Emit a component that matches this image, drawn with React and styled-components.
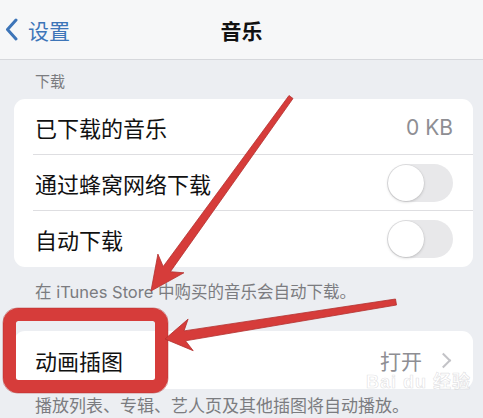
import React from 'react';
import styled, { createGlobalStyle } from 'styled-components';

const GlobalStyle = createGlobalStyle`
  html, body {
    margin: 0;
    padding: 0;
    background: #eceef2;
  }
  body {
    font-family: "Inter", "Noto Sans CJK SC", sans-serif;
    -webkit-font-smoothing: antialiased;
  }
`;

const Screen = styled.div`
  position: relative;
  width: 483px;
  height: 418px;
  overflow: hidden;
  background: #eceef2;
`;

const NavBar = styled.div`
  height: 60px;
  display: grid;
  grid-template-columns: 1fr auto 1fr;
  align-items: center;
  background: #f6f7f8;
  border-bottom: 1px solid #d6d8dc;
  box-sizing: border-box;
`;

const Back = styled.div`
  display: flex;
  align-items: center;
  gap: 10px;
  padding-left: 5px;
  color: #3d75b8;
  font-size: 21px;
`;

const NavTitle = styled.div`
  font-size: 21px;
  font-weight: 700;
  color: #111;
`;

const SectionHeader = styled.div`
  height: 39px;
  display: flex;
  align-items: center;
  padding: 2px 0 0 35px;
  box-sizing: border-box;
  font-size: 15px;
  color: #7b7c80;
`;

const Card = styled.div`
  margin: ${(p) => p.$top || 0}px 10px 0 14px;
  background: #fff;
  border-radius: 11px;
  overflow: hidden;
`;

const Row = styled.div`
  position: relative;
  height: ${(p) => p.$h || 56}px;
  display: flex;
  align-items: center;
  justify-content: space-between;
  padding: 0 20px 0 21px;
  font-size: 22px;
  color: #111;
  &:not(:last-child)::after {
    content: '';
    position: absolute;
    left: 19px;
    right: 0;
    bottom: 0;
    height: 1px;
    background: #dedee1;
  }
`;

const Value = styled.div`
  display: flex;
  align-items: center;
  gap: 16px;
  color: #8e8e93;
  font-size: 21px;
`;

const Chevron = styled.span`
  display: inline-block;
  width: 9px;
  height: 9px;
  border-top: 2px solid #c3c3c7;
  border-right: 2px solid #c3c3c7;
  transform: rotate(45deg);
  margin-right: 4px;
`;

const Toggle = styled.div`
  position: relative;
  width: 66px;
  height: 38px;
  border-radius: 19px;
  background: #e8e8ea;
  &::before {
    content: '';
    position: absolute;
    left: 1px;
    top: 1px;
    width: 36px;
    height: 36px;
    border-radius: 50%;
    background: #fff;
    box-shadow: 0 1px 3px rgba(0, 0, 0, 0.18), 0 0 0 0.5px rgba(0, 0, 0, 0.06);
  }
`;

const Footer = styled.div`
  height: ${(p) => p.$h}px;
  display: flex;
  align-items: ${(p) => p.$align || 'center'};
  padding-left: 35px;
  font-size: ${(p) => p.$size || 16.5}px;
  color: #7b7c80;
  white-space: nowrap;
`;

const Overlay = styled.svg`
  position: absolute;
  left: 0;
  top: 0;
  pointer-events: none;
`;

const Watermark = styled.div`
  position: absolute;
  left: 366px;
  top: 373px;
  font-family: "Liberation Sans", "Noto Sans CJK SC", sans-serif;
  font-size: 18px;
  font-weight: 700;
  line-height: 1;
  color: rgba(255, 255, 255, 0.5);
  -webkit-text-stroke: 0.7px rgba(170, 170, 175, 0.35);
  letter-spacing: 1px;
`;

function arrowPoints(tail, tip, tailW, neckW, headLen, headW, notch) {
  const dx = tip[0] - tail[0];
  const dy = tip[1] - tail[1];
  const len = Math.hypot(dx, dy);
  const ux = dx / len;
  const uy = dy / len;
  const nx = -uy;
  const ny = ux;
  const at = (base, along, side) => [
    base[0] + ux * along + nx * side,
    base[1] + uy * along + ny * side,
  ];
  const pts = [
    at(tail, 0, tailW / 2),
    at(tip, -headLen + notch, neckW / 2),
    at(tip, -headLen, headW / 2),
    tip,
    at(tip, -headLen, -headW / 2),
    at(tip, -headLen + notch, -neckW / 2),
    at(tail, 0, -tailW / 2),
  ];
  return pts.map((p) => p.map((v) => v.toFixed(1)).join(',')).join(' ');
}

const Annotations = () => (
  <Overlay width="483" height="418" viewBox="0 0 483 418">
    <rect
      x="9.5"
      y="314.5"
      width="152"
      height="72"
      rx="9"
      fill="none"
      stroke="#d63c3a"
      strokeWidth="13"
    />
    <rect x="3" y="308" width="165" height="85" rx="14" fill="none" stroke="#b3302e" strokeWidth="0.8" opacity="0.6" />
    <polygon
      points={arrowPoints([291, 97], [151, 291], 5, 9, 34, 32, 7)}
      fill="#d63c3a"
      stroke="#b3302e"
      strokeWidth="0.8"
      strokeLinejoin="round"
    />
    <polygon
      points={arrowPoints([396, 302], [165, 339], 6, 10, 26, 32, 6)}
      fill="#d63c3a"
      stroke="#b3302e"
      strokeWidth="0.8"
      strokeLinejoin="round"
    />
  </Overlay>
);

const App = () => {
  return (
    <Screen>
      <GlobalStyle />
      <NavBar>
        <Back>
          <svg width="13" height="23" viewBox="0 0 13 23">
            <path d="M11 2 L2.5 11.5 L11 21" fill="none" stroke="#3d75b8" strokeWidth="3" strokeLinecap="round" strokeLinejoin="round" />
          </svg>
          <span>设置</span>
        </Back>
        <NavTitle>音乐</NavTitle>
        <div />
      </NavBar>
      <SectionHeader>下载</SectionHeader>
      <Card>
        <Row>
          <span>已下载的音乐</span>
          <Value>0 KB</Value>
        </Row>
        <Row>
          <span>通过蜂窝网络下载</span>
          <Toggle />
        </Row>
        <Row>
          <span>自动下载</span>
          <Toggle />
        </Row>
      </Card>
      <Footer $h={48}>在 iTunes Store 中购买的音乐会自动下载。</Footer>
      <Card $top={16}>
        <Row $h={58}>
          <span>动画插图</span>
          <Value>
            <span>打开</span>
            <Chevron />
          </Value>
        </Row>
      </Card>
      <Footer $h={28} $align="flex-end" $size={17}>
        播放列表、专辑、艺人页及其他插图将自动播放。
      </Footer>
      <Annotations />
      <Watermark>Bai du 经验</Watermark>
    </Screen>
  );
};

export default App;
